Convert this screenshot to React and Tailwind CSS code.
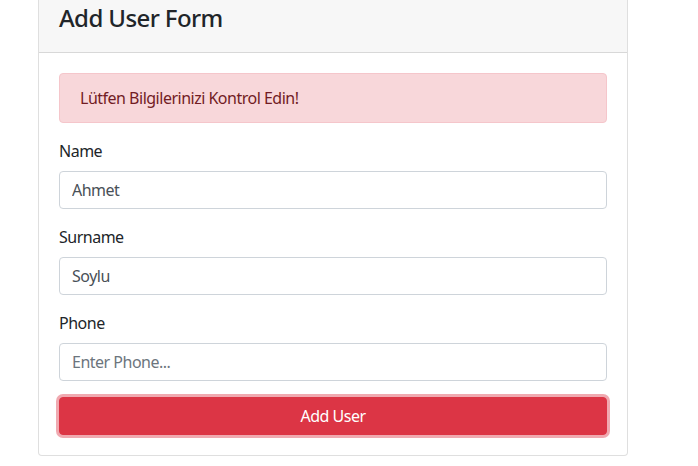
export default function App() {
  return (
    <div
      className="min-h-[466px] bg-white text-[#212529] text-[16px] leading-[24px] tracking-[-0.5px]"
      style={{ fontFamily: '"Segoe UI", "Noto Sans", sans-serif' }}
    >
      <div className="ml-[38px] w-[590px] -mt-[10px] rounded border border-[rgba(0,0,0,0.125)] bg-white">
        {/* Header */}
        <div className="bg-[#f7f7f7] border-b border-[rgba(0,0,0,0.125)] px-5 py-3">
          <h3 className="text-[24px] leading-[29px] font-medium mb-2 tracking-[-0.6px]">Add User Form</h3>
        </div>

        {/* Body */}
        <div className="p-5">
          <div className="mb-4 rounded border border-[#f5c6cb] bg-[#f8d7da] px-5 py-3 text-[#721c24]">
            Lütfen Bilgilerinizi Kontrol Edin!
          </div>

          <form onSubmit={(e) => e.preventDefault()}>
            <div className="mb-4">
              <label className="mb-2 block">Name</label>
              <input
                type="text"
                defaultValue="Ahmet"
                className="block h-[38px] w-full rounded border border-[#ced4da] px-3 text-[#495057] outline-none"
              />
            </div>
            <div className="mb-4">
              <label className="mb-2 block">Surname</label>
              <input
                type="text"
                defaultValue="Soylu"
                className="block h-[38px] w-full rounded border border-[#ced4da] px-3 text-[#495057] outline-none"
              />
            </div>
            <div className="mb-4">
              <label className="mb-2 block">Phone</label>
              <input
                type="text"
                placeholder="Enter Phone..."
                className="block h-[38px] w-full rounded border border-[#ced4da] px-3 text-[#495057] outline-none placeholder:text-[#6c757d]"
              />
            </div>
            <button
              type="submit"
              className="block h-[38px] w-full rounded border border-[#dc3545] bg-[#dc3545] text-white shadow-[0_0_0_3px_rgba(225,83,97,0.5)]"
            >
              Add User
            </button>
          </form>
        </div>
      </div>
    </div>
  )
}
